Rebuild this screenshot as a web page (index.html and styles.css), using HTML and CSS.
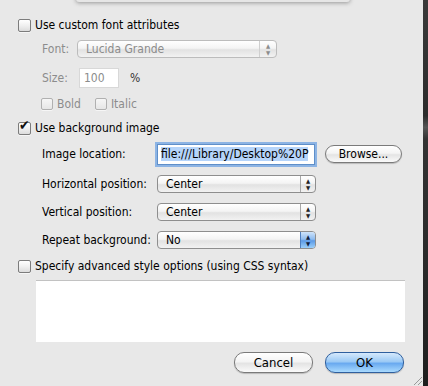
FILE: index.html
```html
<!DOCTYPE html>
<html lang="en">
<head>
    <meta charset="UTF-8">
    <title>Style options</title>
    <link rel="stylesheet" href="styles.css">
</head>
<body>
    <div class="screen">
        <div class="dialog">
            <!-- edge of the sheet above -->
            <div class="sheet-edge"></div>

            <div class="row check-row first">
                <span class="checkbox"></span>
                <span class="check-label">Use custom font attributes</span>
            </div>

            <div class="row indent font-row disabled">
                <span class="small-label">Font:</span>
                <div class="popup popup-font">
                    <span class="popup-text">Lucida Grande</span>
                    <span class="popup-arrows">▲<br>▼</span>
                </div>
            </div>

            <div class="row indent size-row disabled">
                <span class="small-label size-label">Size:</span>
                <div class="text-field size-field">100</div>
                <span class="percent">%</span>
            </div>

            <div class="row indent style-row disabled">
                <span class="checkbox small"></span>
                <span class="check-label">Bold</span>
                <span class="checkbox small italic-box"></span>
                <span class="check-label">Italic</span>
            </div>

            <div class="row check-row bg-row">
                <span class="checkbox checked"><span class="tick">✔</span></span>
                <span class="check-label">Use background image</span>
            </div>

            <div class="row indent field-row loc-row">
                <span class="field-label">Image location:</span>
                <div class="text-field loc-field focused"><span class="selection">file:///Library/Desktop%20P</span></div>
                <button class="aqua-btn browse-btn">Browse...</button>
            </div>

            <div class="row indent field-row">
                <span class="field-label">Horizontal position:</span>
                <div class="popup popup-wide">
                    <span class="popup-text">Center</span>
                    <span class="popup-arrows">▲<br>▼</span>
                </div>
            </div>

            <div class="row indent field-row">
                <span class="field-label">Vertical position:</span>
                <div class="popup popup-wide">
                    <span class="popup-text">Center</span>
                    <span class="popup-arrows">▲<br>▼</span>
                </div>
            </div>

            <div class="row indent field-row">
                <span class="field-label">Repeat background:</span>
                <div class="popup popup-wide">
                    <span class="popup-text">No</span>
                    <span class="popup-arrows active">▲<br>▼</span>
                </div>
            </div>

            <div class="row check-row adv-row">
                <span class="checkbox"></span>
                <span class="check-label">Specify advanced style options (using CSS syntax)</span>
            </div>

            <div class="css-box"></div>

            <div class="buttons">
                <button class="aqua-btn big-btn">Cancel</button>
                <button class="aqua-btn big-btn default-btn">OK</button>
            </div>

            <div class="grip"></div>
        </div>
        <div class="desktop-edge"></div>
    </div>
</body>
</html>
```

FILE: styles.css
```css
html, body {
    margin: 0;
    padding: 0;
}

body {
    font-family: "DejaVu Sans Condensed", "DejaVu Sans", sans-serif;
    font-size: 12px;
    color: #000;
    background: #e8e8e8;
}

.screen {
    display: flex;
    width: 428px;
    height: 386px;
    overflow: hidden;
}

.dialog {
    position: relative;
    flex: 1;
    background: #e8e8e8;
    display: flex;
    flex-direction: column;
}

.desktop-edge {
    width: 5px;
    background: linear-gradient(180deg, #3a3a3a 0%, #2c2c2c 30%, #555 33%, #333 36%, #2a2a2a 70%, #1e1e1e 100%);
}

.sheet-edge {
    position: absolute;
    left: 76px;
    top: -6px;
    width: 274px;
    height: 8px;
    background: #e6e6e6;
    border-radius: 0 0 3px 3px;
    box-shadow: 0 1px 4px rgba(0, 0, 0, 0.35);
}

.row {
    display: flex;
    align-items: center;
}

.check-row {
    padding-left: 18px;
    height: 14px;
}

.indent {
    padding-left: 42px;
}

.first {
    margin-top: 18px;
}

.checkbox {
    position: relative;
    box-sizing: border-box;
    width: 13px;
    height: 13px;
    border: 1px solid #7c7c7c;
    border-radius: 2px;
    background: linear-gradient(180deg, #ffffff 0%, #f0f0f0 50%, #dcdcdc 100%);
    box-shadow: 0 1px 0 rgba(255, 255, 255, 0.6);
    flex: none;
}

.check-label {
    margin-left: 4px;
    white-space: nowrap;
}

.tick {
    position: absolute;
    left: 0px;
    top: -5px;
    font-size: 14px;
    line-height: 14px;
    color: #111;
}

.disabled {
    color: #8c8c8c;
}

.disabled .checkbox {
    border-color: #b0b0b0;
    background: linear-gradient(180deg, #f6f6f6 0%, #e6e6e6 100%);
}

.small-label {
    width: 35px;
}

.font-row {
    margin-top: 8px;
    height: 18px;
}

.size-row {
    margin-top: 10px;
    height: 20px;
}

.size-label {
    width: 37px;
}

.style-row {
    margin-top: 9px;
    height: 14px;
    padding-left: 41px;
}

.style-row .checkbox {
    width: 12px;
    height: 12px;
}

.italic-box {
    margin-left: 14px;
}

.bg-row {
    margin-top: 10px;
}

.popup {
    position: relative;
    box-sizing: border-box;
    height: 18px;
    border: 1px solid #8e8e8e;
    border-radius: 4px;
    background: linear-gradient(180deg, #ffffff 0%, #f4f4f4 45%, #e2e2e2 55%, #f2f2f2 100%);
    display: flex;
    align-items: center;
}

.popup-text {
    flex: 1;
    padding-left: 8px;
    white-space: nowrap;
}

.popup-arrows {
    width: 15px;
    height: 16px;
    border-left: 1px solid #a8a8a8;
    font-size: 6px;
    line-height: 7px;
    text-align: center;
    padding-top: 1px;
    box-sizing: border-box;
    color: #222;
}

.popup-arrows.active {
    border-left-color: #4f7fbf;
    border-radius: 0 3px 3px 0;
    background: linear-gradient(180deg, #cfe4fb 0%, #8fbcef 45%, #5d9be6 55%, #9cd0fb 100%);
    color: #10203a;
}

.popup-font {
    width: 200px;
    border-color: #bcbcbc;
}

.popup-font .popup-arrows {
    width: 17px;
    border-left-color: #cfcfcf;
    color: #8c8c8c;
}

.popup-wide {
    width: 159px;
}

.text-field {
    box-sizing: border-box;
    background: #fff;
    border: 1px solid #c4c4c4;
    border-top-color: #9c9c9c;
    white-space: nowrap;
    overflow: hidden;
}

.size-field {
    width: 40px;
    height: 20px;
    line-height: 18px;
    padding-left: 4px;
    border-color: #d8d8d8;
    color: #8c8c8c;
}

.percent {
    margin-left: 11px;
    color: #333;
}

.field-row {
    margin-top: 10px;
    height: 18px;
}

.field-label {
    width: 115px;
    flex: none;
    white-space: nowrap;
}

.loc-row {
    margin-top: 8px;
    height: 22px;
}

.loc-field {
    width: 158px;
    height: 21px;
    line-height: 17px;
    padding: 1px 0 0 3px;
}

.focused {
    border: 1px solid #5f8fc9;
    box-shadow: 0 0 0 2px #8db4e4;
}

.selection {
    background: #b5d4fa;
}

.aqua-btn {
    font-family: inherit;
    font-size: 12px;
    color: #000;
    border: 1px solid #7a7a7a;
    border-radius: 10px;
    background: linear-gradient(180deg, #ffffff 0%, #f4f4f4 45%, #e4e4e4 55%, #fafafa 100%);
    box-shadow: 0 1px 1px rgba(0, 0, 0, 0.2);
    padding: 0;
}

.browse-btn {
    margin-left: 10px;
    width: 77px;
    height: 18px;
    line-height: 16px;
}

.adv-row {
    margin-top: 10px;
}

.css-box {
    margin: 7px 0 0 36px;
    width: 369px;
    height: 62px;
    background: #fff;
    border-top: 1px solid #c2c2c2;
    box-sizing: border-box;
}

.buttons {
    display: flex;
    justify-content: flex-end;
    gap: 12px;
    margin-top: 10px;
    padding-right: 19px;
}

.big-btn {
    width: 79px;
    height: 21px;
    font-size: 13px;
    line-height: 19px;
}

.default-btn {
    border-color: #2f5f9e;
    background: linear-gradient(180deg, #d6e9fc 0%, #9ccaf5 45%, #6aaaf0 55%, #a9dafe 100%);
}

.grip {
    position: absolute;
    right: 1px;
    bottom: 1px;
    width: 10px;
    height: 10px;
    background: linear-gradient(135deg, transparent 55%, #999 56%, #999 62%, transparent 63%, transparent 75%, #999 76%, #999 82%, transparent 83%);
}
```
